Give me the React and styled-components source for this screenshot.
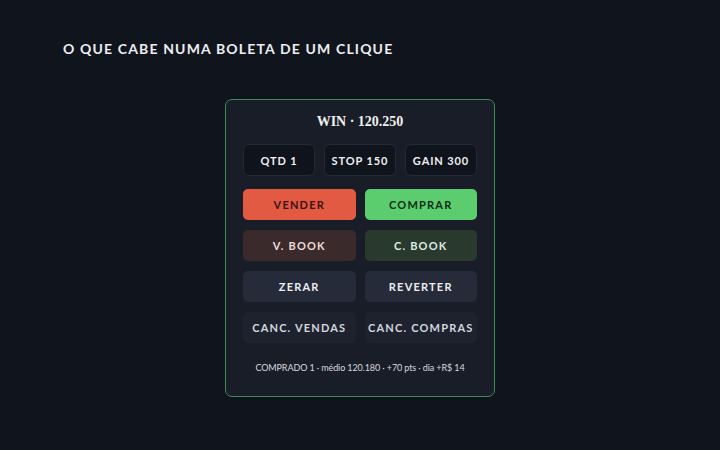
import React from "react";
import styled, { createGlobalStyle } from "styled-components";

const Global = createGlobalStyle`
  html, body {
    margin: 0;
    padding: 0;
    background: #10141c;
  }
  body {
    font-family: "Lato", "Open Sans", sans-serif;
    color: #e8eaee;
  }
`;

const Page = styled.div`
  width: 720px;
  height: 450px;
  box-sizing: border-box;
  padding: 40px 0 0 63px;
  background: #10141c;
`;

const Heading = styled.h1`
  margin: 0;
  font-size: 14px;
  font-weight: 700;
  letter-spacing: 1.15px;
  color: #eceef2;
  line-height: 18px;
`;

const Stage = styled.div`
  display: flex;
  justify-content: center;
  padding-top: 41px;
  margin-left: -63px;
`;

const Card = styled.div`
  width: 270px;
  box-sizing: border-box;
  background: #181d28;
  border: 1.5px solid #3f8a55;
  border-radius: 7px;
  padding: 13px 17px 0;
  height: 298px;
`;

const Symbol = styled.div`
  text-align: center;
  font-family: "Liberation Serif", "DejaVu Serif", serif;
  font-weight: 700;
  font-size: 14px;
  color: #f1f1ee;
  line-height: 18px;
`;

const Params = styled.div`
  display: grid;
  grid-template-columns: repeat(3, 1fr);
  gap: 9px;
  margin-top: 13px;
`;

const Param = styled.div`
  height: 32px;
  box-sizing: border-box;
  display: flex;
  align-items: center;
  justify-content: center;
  background: #0f131b;
  border: 1px solid #232935;
  border-radius: 6px;
  font-size: 11px;
  font-weight: 700;
  letter-spacing: 0.9px;
  color: #eef0f3;
`;

const Actions = styled.div`
  display: grid;
  grid-template-columns: 1fr 1fr;
  column-gap: 9px;
  row-gap: 10px;
  margin-top: 13px;
`;

const tones = {
  sell: { bg: "#e35a43", fg: "#3a1410" },
  buy: { bg: "#5ccd6f", fg: "#0f2a16" },
  sellBook: { bg: "#3a2a2b", fg: "#ecdcd8" },
  buyBook: { bg: "#29392d", fg: "#dfece1" },
  neutral: { bg: "#252b38", fg: "#eceef2" },
  cancel: { bg: "#1d222e", fg: "#d4d7dd" },
};

const Action = styled.button`
  height: 31px;
  border: none;
  border-radius: 5px;
  background: ${(p) => tones[p.$tone].bg};
  color: ${(p) => tones[p.$tone].fg};
  font-family: "Lato", "Open Sans", sans-serif;
  font-size: 11px;
  font-weight: 700;
  letter-spacing: 1.2px;
  padding: 0;
`;

const Status = styled.div`
  margin-top: 19px;
  text-align: center;
  font-size: 9px;
  color: #d6d9df;
  letter-spacing: -0.1px;
`;

export default function App() {
  return (
    <Page>
      <Global />
      <Heading>O QUE CABE NUMA BOLETA DE UM CLIQUE</Heading>
      <Stage>
        <Card>
          <Symbol>WIN · 120.250</Symbol>
          <Params>
            <Param>QTD 1</Param>
            <Param>STOP 150</Param>
            <Param>GAIN 300</Param>
          </Params>
          <Actions>
            <Action $tone="sell">VENDER</Action>
            <Action $tone="buy">COMPRAR</Action>
            <Action $tone="sellBook">V. BOOK</Action>
            <Action $tone="buyBook">C. BOOK</Action>
            <Action $tone="neutral">ZERAR</Action>
            <Action $tone="neutral">REVERTER</Action>
            <Action $tone="cancel">CANC. VENDAS</Action>
            <Action $tone="cancel">CANC. COMPRAS</Action>
          </Actions>
          <Status>COMPRADO 1 · médio 120.180 · +70 pts · dia +R$ 14</Status>
        </Card>
      </Stage>
    </Page>
  );
}
